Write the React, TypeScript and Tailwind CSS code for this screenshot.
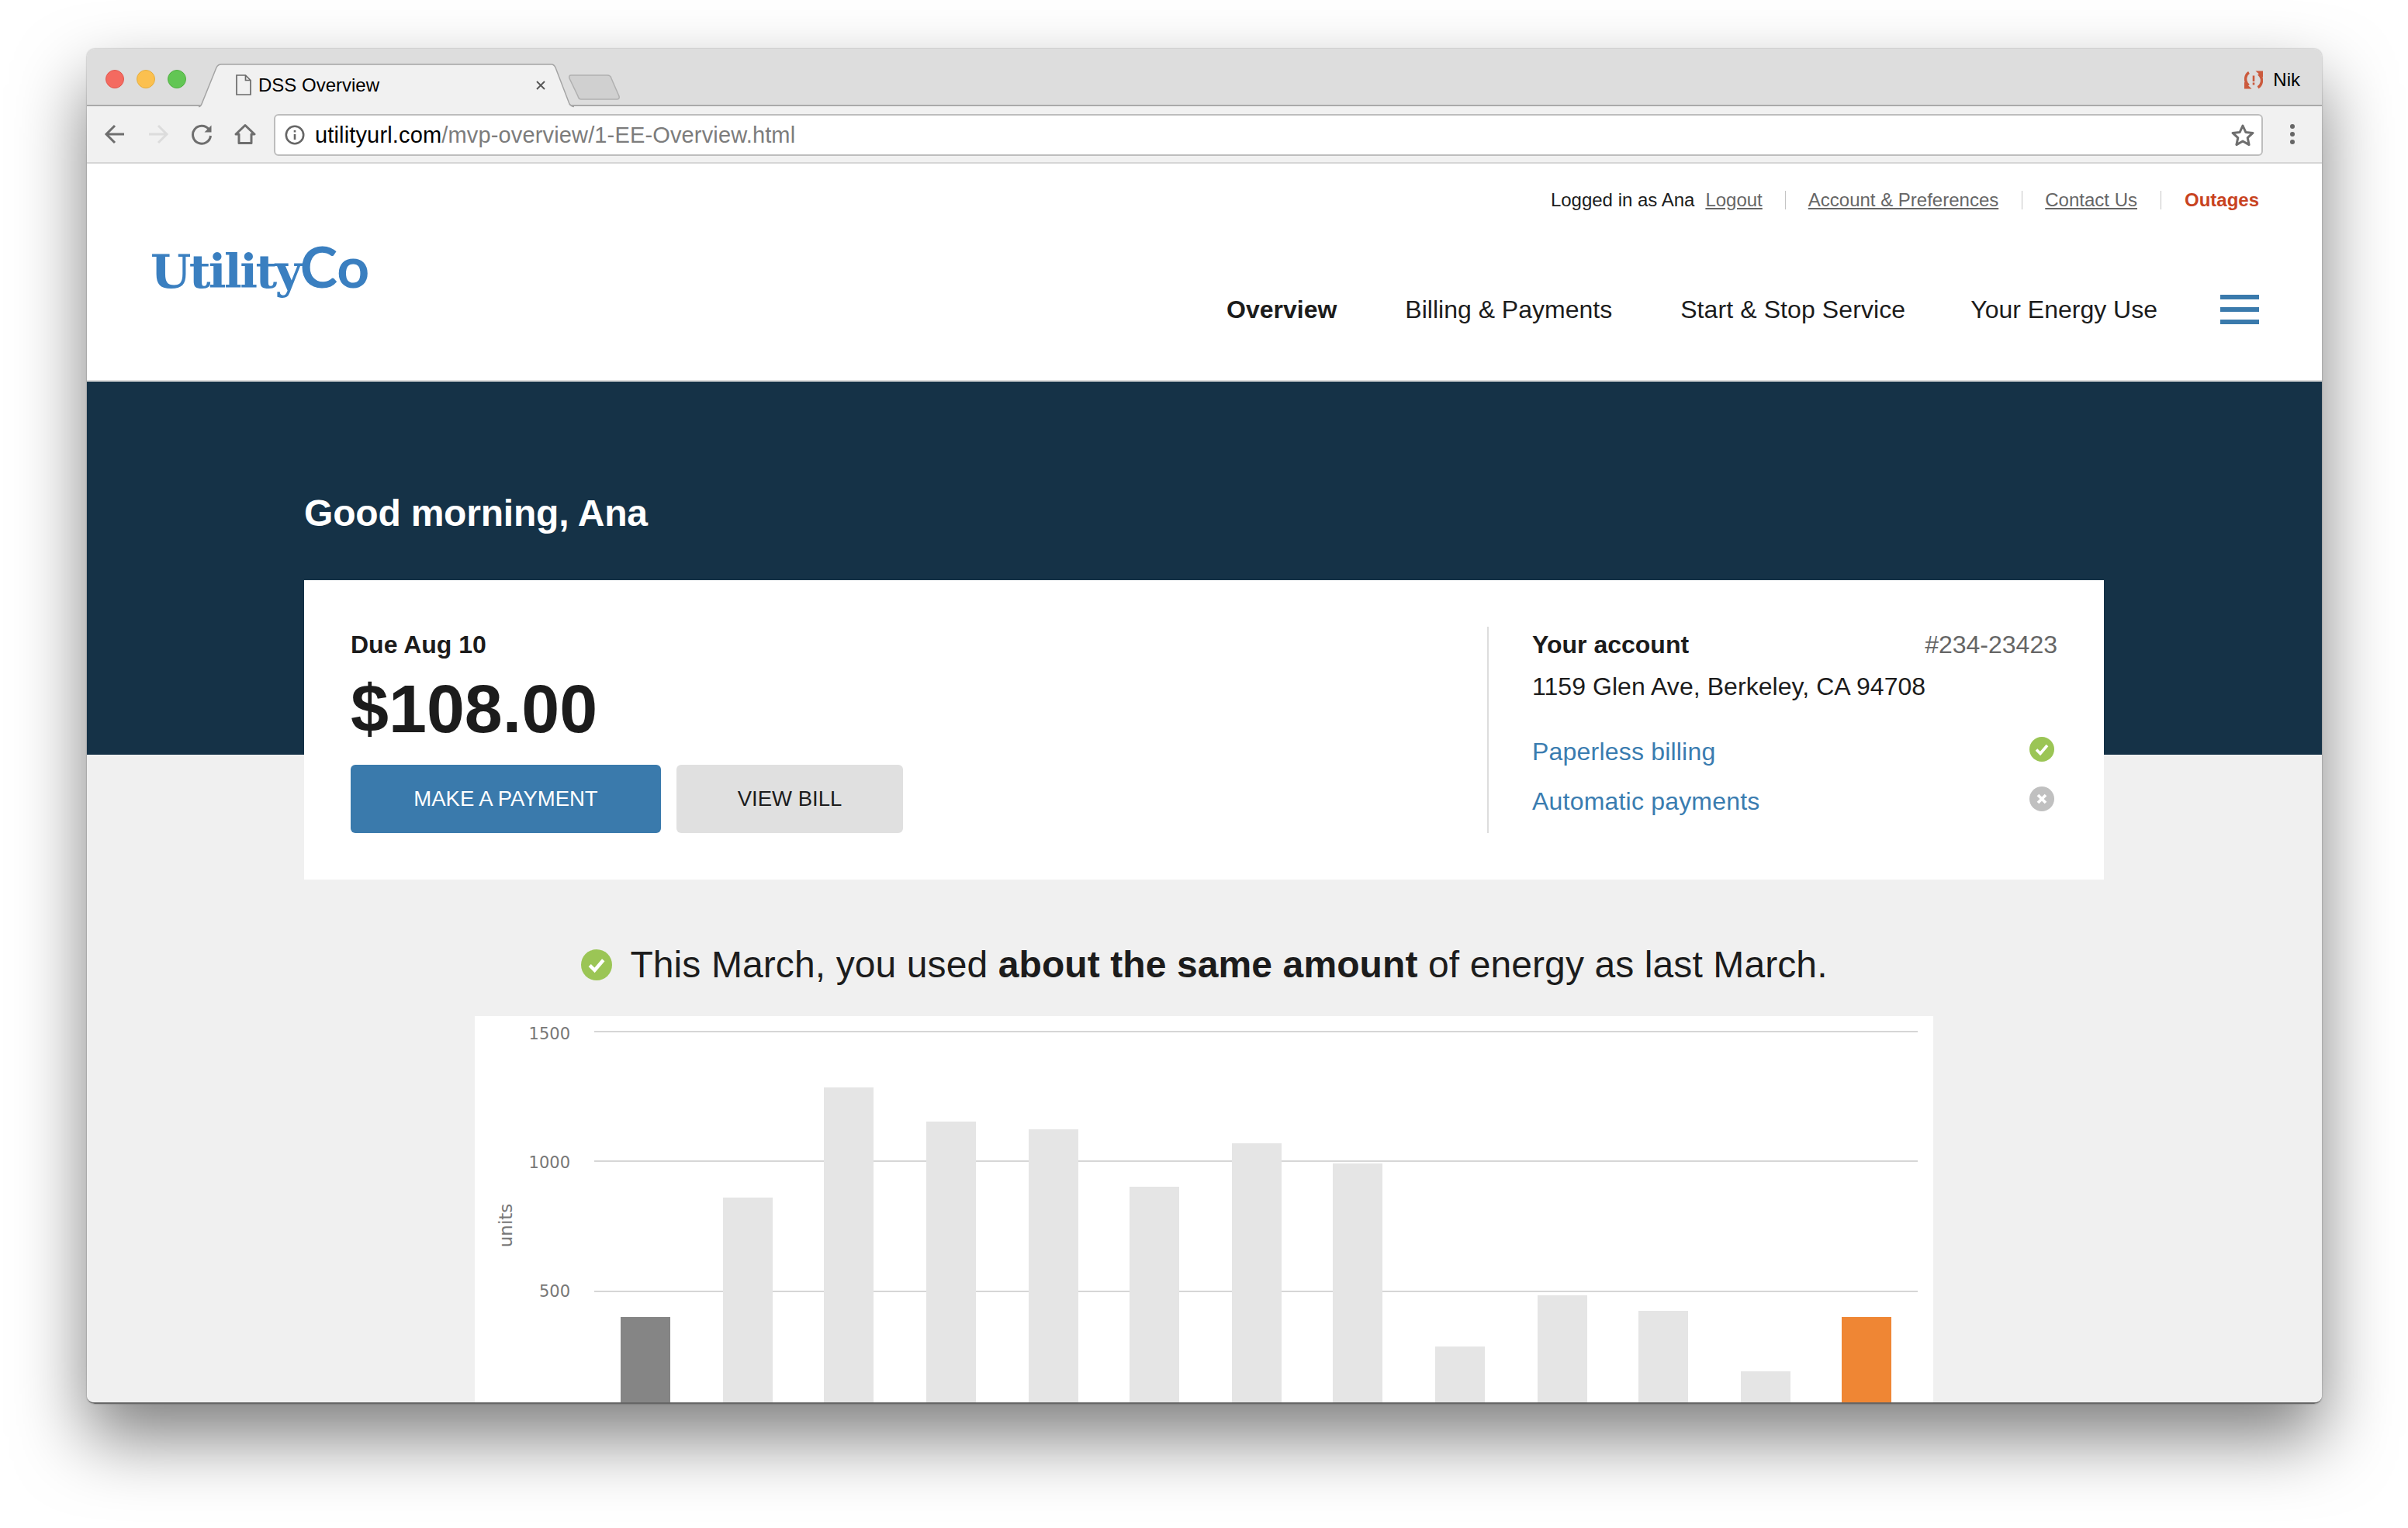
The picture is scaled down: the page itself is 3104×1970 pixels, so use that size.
import React from 'react';

const sans = "font-['Liberation_Sans',Arial,sans-serif]";

const bars = [
  { x: 800, top: 1698, color: '#858585' },
  { x: 932, top: 1544, color: '#e5e5e5' },
  { x: 1062, top: 1402, color: '#e5e5e5' },
  { x: 1194, top: 1446, color: '#e5e5e5' },
  { x: 1326, top: 1456, color: '#e5e5e5' },
  { x: 1456, top: 1530, color: '#e5e5e5' },
  { x: 1588, top: 1474, color: '#e5e5e5' },
  { x: 1718, top: 1500, color: '#e5e5e5' },
  { x: 1850, top: 1736, color: '#e5e5e5' },
  { x: 1982, top: 1670, color: '#e5e5e5' },
  { x: 2112, top: 1690, color: '#e5e5e5' },
  { x: 2244, top: 1768, color: '#e5e5e5' },
  { x: 2374, top: 1698, color: '#ef8634' },
];

function TabBar() {
  return (
    <div className="flex h-[74px] shrink-0 border-b-2 border-[#a9a9a9] bg-[#dddddd]">
      <div className="ml-[24px] mt-[27px] flex h-[24px] gap-[16px]">
        <div className="h-[24px] w-[24px] rounded-full border border-[#e0584f] bg-[#f46a60]" />
        <div className="h-[24px] w-[24px] rounded-full border border-[#e5ae3f] bg-[#fbc04f]" />
        <div className="h-[24px] w-[24px] rounded-full border border-[#52b044] bg-[#62c654]" />
      </div>
      <div className="relative ml-[16px] mt-[19px] flex h-[55px] w-[484px] items-center pl-[48px] pr-[36px]">
        <svg className="absolute left-0 top-0" width="484" height="57" viewBox="0 0 484 57">
          <path d="M0 55.5 H1 Q3 55 4 52 L23 5 Q25 1 29 1 H455 Q458 1 460 5 L478 52 Q480 55 484 55.5" fill="#f1f1f1" stroke="#a4a4a4" strokeWidth="1.5" />
        </svg>
        <svg className="relative" width="20" height="27" viewBox="0 0 20 27" fill="none" stroke="#6a6a6a" strokeWidth="1.7">
          <path d="M1 1 H12.5 L19 7.5 V26 H1 Z M12.5 1 V7.5 H19" />
        </svg>
        <span className={`relative ml-[9px] flex-1 text-[24px] leading-[30px] text-black ${sans}`}>DSS Overview</span>
        <svg className="relative" width="14" height="14" viewBox="0 0 14 14" stroke="#555" strokeWidth="1.8">
          <path d="M2 2 L12 12 M12 2 L2 12" />
        </svg>
      </div>
      <svg className="ml-[-7px] mt-[33px]" width="68" height="33" viewBox="0 0 68 33">
        <path d="M3 1 H50 Q54 1 55 5 L65 28 Q66 32 62 32 H16 Q13 32 12 28 L1 5 Q0 1 3 1 Z" fill="#d0d0d0" stroke="#b0b0b0" strokeWidth="1.5" />
      </svg>
      <div className="ml-auto mr-[28px] mt-[26px] flex h-[28px] items-center gap-[13px]">
        <svg width="24" height="24" viewBox="0 0 24 24" fill="none" stroke="#cb5a3d" strokeWidth="3.4">
          <path d="M6 2.5 C1.5 5 0.5 12 3 16 L5.5 19" />
          <path d="M17.5 21.7 C22.5 19 23.8 12 21 7.5 L18.5 4.5" />
          <path d="M0 14.5 V23.5 H9.5 Z" fill="#cb5a3d" stroke="none" />
          <path d="M24 9 V0.5 H14.5 Z" fill="#cb5a3d" stroke="none" />
          <path d="M12 6.5 V14 M12 15.5 V18.5" strokeWidth="2.6" />
        </svg>
        <span className={`text-[24px] leading-[28px] text-black ${sans}`}>Nik</span>
      </div>
    </div>
  );
}

function Toolbar() {
  return (
    <div className="flex h-[74px] shrink-0 border-b-2 border-[#d6d6d6] bg-[#f1f1f1] pl-[22px]">
      <div className="flex h-[72px] items-center gap-[28px]">
        <svg width="28" height="28" viewBox="0 0 28 28" fill="none" stroke="#6e6e6e" strokeWidth="3">
          <path d="M26 14 H3 M14 3 L3 14 L14 25" />
        </svg>
        <svg width="28" height="28" viewBox="0 0 28 28" fill="none" stroke="#dcdcdc" strokeWidth="3">
          <path d="M2 14 H25 M14 3 L25 14 L14 25" />
        </svg>
        <svg width="28" height="28" viewBox="0 0 28 28" fill="none" stroke="#6e6e6e" strokeWidth="3">
          <path d="M23 7.5 A11.5 11.5 0 1 0 25.5 16" />
          <path d="M26.5 2.5 V11.5 H17.5 Z" fill="#6e6e6e" stroke="none" />
        </svg>
        <svg width="28" height="28" viewBox="0 0 28 28" fill="none" stroke="#6e6e6e" strokeWidth="3">
          <path d="M2 14 L14 2.5 L26 14 H22 V25.5 H6 V14 Z" strokeLinejoin="round" />
        </svg>
      </div>
      <div className="ml-[23px] mt-[10px] flex h-[54px] w-[2564px] items-center rounded-[6px] border-2 border-[#bdbdbd] bg-white pl-[12px] pr-[8px]">
        <svg width="26" height="26" viewBox="0 0 26 26" fill="none" stroke="#666" strokeWidth="2.6">
          <circle cx="13" cy="13" r="11.2" />
          <path d="M13 12 V19 M13 7 V9.6" />
        </svg>
        <span className={`ml-[13px] flex-1 text-[29px] leading-[34px] tracking-[0.15px] text-[#7c7c7c] ${sans}`}>
          <span className="text-black">utilityurl.com</span>/mvp-overview/1-EE-Overview.html
        </span>
        <svg width="32" height="30" viewBox="0 0 32 30" fill="none" stroke="#6e6e6e" strokeWidth="3" strokeLinejoin="round">
          <path d="M16 3 L19.8 11.4 L29 12.4 L22.2 18.6 L24.1 27.6 L16 23 L7.9 27.6 L9.8 18.6 L3 12.4 L12.2 11.4 Z" />
        </svg>
      </div>
      <div className="ml-[35px] flex h-[72px] flex-col justify-center gap-[4px]">
        <div className="h-[6px] w-[6px] rounded-full bg-[#666]" />
        <div className="h-[6px] w-[6px] rounded-full bg-[#666]" />
        <div className="h-[6px] w-[6px] rounded-full bg-[#666]" />
      </div>
    </div>
  );
}

function Header() {
  return (
    <header className={`flex h-[281px] shrink-0 justify-between border-b-2 border-[#dedede] bg-white pl-[82px] pr-[81px] ${sans}`}>
      <div className="pt-[94px] font-bold leading-[76px] text-[#3a7fc0]">
        <span className="font-['DejaVu_Serif',serif] text-[60px] tracking-[-2.6px]">Utility</span>
        <span className="font-['Lato',sans-serif] text-[73px]">Co</span>
      </div>
      <div className="flex flex-col items-end pt-[33px]">
        <div className="flex items-center text-[24px] leading-[28px]">
          <span className="text-[#1c1c1c]">Logged in as Ana</span>
          <a className="ml-[14px] text-[#666] underline">Logout</a>
          <div className="mx-[29px] h-[24px] w-[1px] bg-[#c4c4c4]" />
          <a className="text-[#666] underline">Account &amp; Preferences</a>
          <div className="mx-[29.5px] h-[24px] w-[1px] bg-[#c4c4c4]" />
          <a className="text-[#666] underline">Contact Us</a>
          <div className="mx-[30px] h-[24px] w-[1px] bg-[#c4c4c4]" />
          <a className="font-bold text-[#c8431f]">Outages</a>
        </div>
        <nav className="mt-[108px] flex items-center gap-[88px] text-[32px] leading-[38px] text-[#1c1c1c]">
          <a className="font-bold">Overview</a>
          <a>Billing &amp; Payments</a>
          <a className="tracking-[0.1px]">Start &amp; Stop Service</a>
          <a className="ml-[-4px]">Your Energy Use</a>
          <div className="ml-[-7px] flex w-[50px] flex-col gap-[10px]">
            <div className="h-[6px] bg-[#3a7aac]" />
            <div className="h-[6px] bg-[#3a7aac]" />
            <div className="h-[6px] bg-[#3a7aac]" />
          </div>
        </nav>
      </div>
    </header>
  );
}

function CheckDot({ size }: { size: number }) {
  return (
    <svg width={size} height={size} viewBox="0 0 32 32">
      <circle cx="16" cy="16" r="16" fill="#9bc555" />
      <path d="M9 16.5 L14 21.5 L23 11" fill="none" stroke="#fff" strokeWidth="3.6" />
    </svg>
  );
}

function AccountCard() {
  return (
    <div className="relative z-10 ml-[280px] -mt-[225px] flex h-[386px] w-[2320px] bg-white px-[60px] py-[60px]">
      <div className="flex-1">
        <div className="text-[32px] font-bold leading-[46px] text-[#1c1c1c]">Due Aug 10</div>
        <div className="mt-[10px] text-[88px] font-bold leading-[100px] text-[#1c1c1c]">$108.00</div>
        <div className="mt-[22px] flex gap-[20px] text-[27.5px]">
          <button className="h-[88px] w-[400px] rounded-[6px] bg-[#3a7aac] text-white">MAKE A PAYMENT</button>
          <button className="h-[88px] w-[292px] rounded-[6px] bg-[#e0e0e0] text-[#1c1c1c]">VIEW BILL</button>
        </div>
      </div>
      <div className="flex h-[266px] w-[735px] flex-col border-l-2 border-[#dddddd] pl-[56px] text-[32px] leading-[46px]">
        <div className="flex justify-between">
          <span className="font-bold text-[#1c1c1c]">Your account</span>
          <span className="text-[#666]">#234-23423</span>
        </div>
        <div className="mt-[8px] tracking-[0.06px] text-[#1c1c1c]">1159 Glen Ave, Berkeley, CA 94708</div>
        <div className="mt-[38px] flex items-center justify-between pr-[4px] tracking-[0.2px] text-[#3a7cb0]">
          <span>Paperless billing</span>
          <span className="mt-[-6px]"><CheckDot size={32} /></span>
        </div>
        <div className="mt-[18px] flex items-center justify-between pr-[4px] tracking-[0.2px] text-[#3a7cb0]">
          <span>Automatic payments</span>
          <svg className="mt-[-6px]" width="32" height="32" viewBox="0 0 32 32">
            <circle cx="16" cy="16" r="16" fill="#c0c0c0" />
            <path d="M11 11 L21 21 M21 11 L11 21" fill="none" stroke="#fff" strokeWidth="3.8" />
          </svg>
        </div>
      </div>
    </div>
  );
}

function UsageChart() {
  const labelFont = "'DejaVu Sans', sans-serif";
  return (
    <div className="ml-[500px] mt-[38px] h-[500px] w-[1880px] bg-white">
      <svg width="1880" height="500" viewBox="612 1310 1880 500">
        {[1330, 1497, 1665].map((y) => (
          <rect key={y} x="766" y={y - 1} width="1706" height="2" fill="#d6d6d6" />
        ))}
        {bars.map((b) => (
          <rect key={b.x} x={b.x} y={b.top} width="64" height={1810 - b.top} fill={b.color} />
        ))}
        <g fill="#777" fontSize="21" fontFamily={labelFont} textAnchor="end">
          <text x="735" y="1340">1500</text>
          <text x="735" y="1506">1000</text>
          <text x="735" y="1672">500</text>
        </g>
        <text transform="translate(660 1580) rotate(-90)" fill="#777" fontSize="23" fontFamily={labelFont} textAnchor="middle">units</text>
      </svg>
    </div>
  );
}

export default function App() {
  return (
    <div className="h-[1970px] w-[3104px] overflow-hidden bg-white pl-[112px] pt-[63px]">
      <div className="flex h-[1747px] w-[2881px] flex-col overflow-hidden rounded-[10px] border-b-2 border-[#666] shadow-[0_44px_90px_rgba(0,0,0,0.5),0_0_2px_rgba(0,0,0,0.4)]">
        <TabBar />
        <Toolbar />
        <Header />
        <main className={`flex-1 bg-[#f0f0f0] ${sans}`}>
          <div className="h-[481px] bg-[#153247] pl-[280px] pt-[141px] pb-[225px]">
            <h1 className="text-[48px] font-bold leading-[58px] tracking-[-0.2px] text-white">Good morning, Ana</h1>
          </div>
          <AccountCard />
          <div className="mt-[82px] flex items-center justify-center gap-[23px] text-[48px] leading-[56px] tracking-[0.1px] text-[#1c1c1c]">
            <CheckDot size={40} />
            <p>This March, you used <b>about the same amount</b> of energy as last March.</p>
          </div>
          <UsageChart />
        </main>
      </div>
    </div>
  );
}
